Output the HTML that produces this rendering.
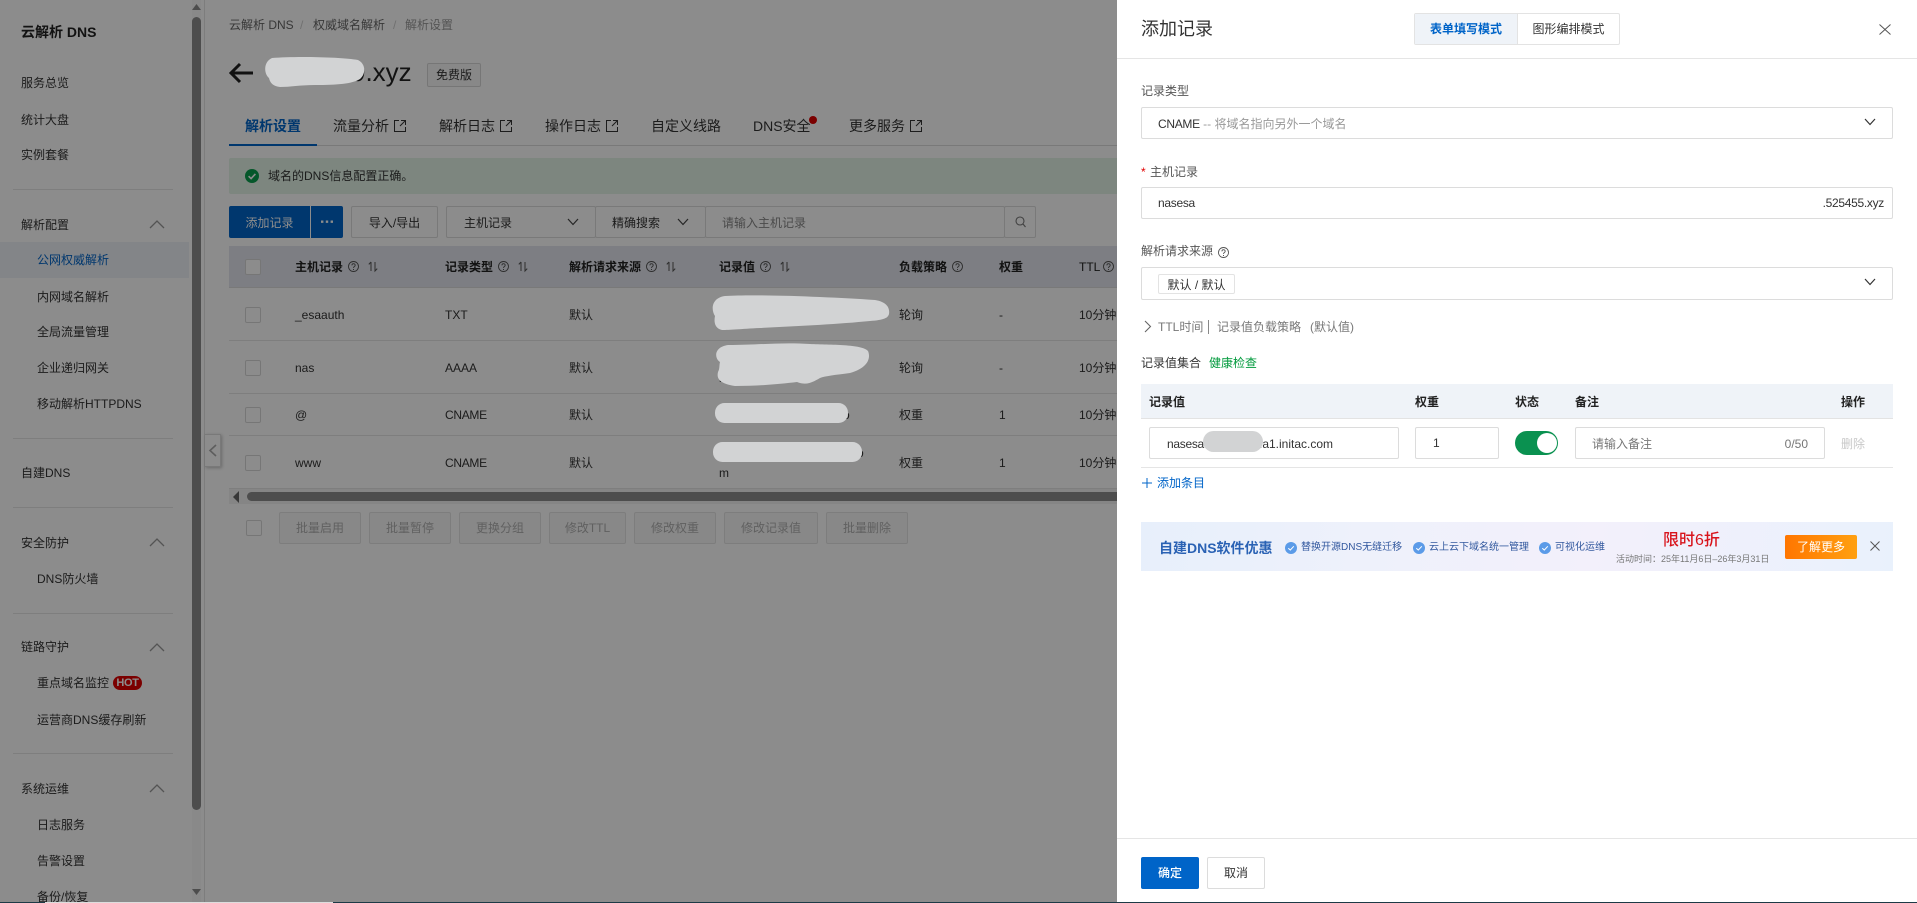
<!DOCTYPE html>
<html lang="zh-CN"><head><meta charset="utf-8"><title>添加记录</title>
<style>
html,body{margin:0;padding:0;width:1917px;height:903px;overflow:hidden;background:#fff}
body{position:relative;font:12px/20px "Liberation Sans","Noto Sans CJK SC",sans-serif;color:#333}
.a,.t,.b{position:absolute;box-sizing:border-box}
.t{white-space:nowrap;height:20px;line-height:20px}
.b{border:1px solid #dcdcdc;background:#fff;border-radius:2px;text-align:center;line-height:30px;white-space:nowrap}
.tb{line-height:32px}
.dv{position:absolute;left:13px;width:160px;height:1px;background:#e5e5e5}
.th{font-weight:700;color:#222}
.dis{background:#f7f7f7;color:#b0b0b0;border-color:#e3e3e3}
.cb{position:absolute;width:16px;height:16px;border:1px solid #d8d8d8;border-radius:2px;box-sizing:border-box;background:#fff}
svg{position:absolute;overflow:visible;fill:none}
.line{position:absolute;height:1px;background:#e5e5e5}
#overlay{position:absolute;left:0;top:0;width:1917px;height:903px;background:rgba(0,0,0,.45)}
#drawer{position:absolute;left:1117px;top:0;width:800px;height:903px;background:#fff}
#drawer .inner{position:absolute;left:-1117px;top:0;width:1917px;height:903px}
.ink{position:absolute;fill:#d2d3d4}
</style></head><body>

<!-- sidebar -->
<div class="a" style="left:0;top:0;width:205px;height:903px;background:#fff;border-right:1px solid #e3e3e3"></div>
<div class="a" style="left:192px;top:0;width:9px;height:903px;background:#fafafa"></div>
<div class="a" style="left:192px;top:17px;width:9px;height:793px;background:#8c8c8c;border-radius:5px"></div>
<svg style="left:192px;top:3px" width="9" height="8"><path d="M4.5 1L9 7H0Z" fill="#8c8c8c"/></svg>
<svg style="left:192px;top:888px" width="9" height="8"><path d="M0 1H9L4.5 7Z" fill="#8c8c8c"/></svg>

<div class="t" style="left:21px;top:22px;font-size:14px;font-weight:700;color:#222">云解析 DNS</div>
<div class="t" style="left:21px;top:73px">服务总览</div>
<div class="t" style="left:21px;top:110px">统计大盘</div>
<div class="t" style="left:21px;top:145px">实例套餐</div>
<div class="dv" style="top:189px"></div>
<div class="t" style="left:21px;top:215px">解析配置</div>
<svg style="left:149px;top:220px" width="16" height="9"><path d="M1 8L8 1L15 8" stroke="#999" stroke-width="1.3"/></svg>
<div class="a" style="left:0;top:242px;width:189px;height:36px;background:#eff3f8"></div>
<div class="t" style="left:37px;top:250px;color:#0064c8">公网权威解析</div>
<div class="t" style="left:37px;top:287px">内网域名解析</div>
<div class="t" style="left:37px;top:322px">全局流量管理</div>
<div class="t" style="left:37px;top:358px">企业递归网关</div>
<div class="t" style="left:37px;top:394px">移动解析HTTPDNS</div>
<div class="dv" style="top:438px"></div>
<div class="t" style="left:21px;top:463px">自建DNS</div>
<div class="dv" style="top:507px"></div>
<div class="t" style="left:21px;top:533px">安全防护</div>
<svg style="left:149px;top:538px" width="16" height="9"><path d="M1 8L8 1L15 8" stroke="#999" stroke-width="1.3"/></svg>
<div class="t" style="left:37px;top:569px">DNS防火墙</div>
<div class="dv" style="top:613px"></div>
<div class="t" style="left:21px;top:637px">链路守护</div>
<svg style="left:149px;top:643px" width="16" height="9"><path d="M1 8L8 1L15 8" stroke="#999" stroke-width="1.3"/></svg>
<div class="t" style="left:37px;top:673px">重点域名监控</div>
<div class="a" style="left:113px;top:676px;width:29px;height:14px;border-radius:7px;background:#e10000;color:#fff;font-size:11px;font-weight:700;line-height:14px;text-align:center;letter-spacing:-.3px">HOT</div>
<div class="t" style="left:37px;top:710px">运营商DNS缓存刷新</div>
<div class="dv" style="top:753px"></div>
<div class="t" style="left:21px;top:779px">系统运维</div>
<svg style="left:149px;top:784px" width="16" height="9"><path d="M1 8L8 1L15 8" stroke="#999" stroke-width="1.3"/></svg>
<div class="t" style="left:37px;top:815px">日志服务</div>
<div class="t" style="left:37px;top:851px">告警设置</div>
<div class="t" style="left:37px;top:887px">备份/恢复</div>

<!-- collapse handle -->
<div class="a" style="left:205px;top:434px;width:16px;height:33px;background:#fff;border:1px solid #ddd;border-left:0;box-shadow:1px 1px 3px rgba(0,0,0,.25)"></div>
<svg style="left:209px;top:444px" width="8" height="13"><path d="M7 1L1 6.5L7 12" stroke="#aaa" stroke-width="1.6"/></svg>

<!-- breadcrumb -->
<div class="t" style="left:229px;top:15px;color:#666">云解析 DNS</div>
<div class="t" style="left:300px;top:15px;color:#ccc">/</div>
<div class="t" style="left:313px;top:15px;color:#666">权威域名解析</div>
<div class="t" style="left:393px;top:15px;color:#ccc">/</div>
<div class="t" style="left:405px;top:15px;color:#999">解析设置</div>

<!-- title -->
<svg style="left:229px;top:62px" width="25" height="22"><path d="M24 11H2M11 2L2 11L11 20" stroke="#222" stroke-width="3"/></svg>
<div class="t" style="left:351px;top:56px;height:32px;line-height:32px;font-size:26px;font-weight:500;color:#222">9.xyz</div>
<div class="a" style="left:427px;top:63px;width:54px;height:24px;border:1px solid #d8d8d8;border-radius:2px;text-align:center;line-height:22px;color:#333;background:#f7f7f7">免费版</div>

<!-- tabs -->
<div class="line" style="left:229px;top:145px;width:900px;background:#dcdcdc"></div>
<div class="a" style="left:229px;top:144px;width:88px;height:2px;background:#0064c8"></div>
<div class="t" style="left:245px;top:116px;font-size:14px;font-weight:700;color:#0064c8">解析设置</div>
<div class="t" style="left:333px;top:116px;font-size:14px">流量分析</div>
<div class="t" style="left:439px;top:116px;font-size:14px">解析日志</div>
<div class="t" style="left:545px;top:116px;font-size:14px">操作日志</div>
<div class="t" style="left:651px;top:116px;font-size:14px">自定义线路</div>
<div class="t" style="left:753px;top:116px;font-size:14px">DNS安全</div>
<div class="a" style="left:809px;top:116px;width:8px;height:8px;border-radius:50%;background:#e10000"></div>
<div class="t" style="left:849px;top:116px;font-size:14px">更多服务</div>
<svg style="left:394px;top:120px" width="12" height="12"><path d="M5 .5H.5V11.5H11.5V7M7 .5H11.5V5M11.5 .5L6 6" stroke="#333"/></svg>
<svg style="left:500px;top:120px" width="12" height="12"><path d="M5 .5H.5V11.5H11.5V7M7 .5H11.5V5M11.5 .5L6 6" stroke="#333"/></svg>
<svg style="left:606px;top:120px" width="12" height="12"><path d="M5 .5H.5V11.5H11.5V7M7 .5H11.5V5M11.5 .5L6 6" stroke="#333"/></svg>
<svg style="left:910px;top:120px" width="12" height="12"><path d="M5 .5H.5V11.5H11.5V7M7 .5H11.5V5M11.5 .5L6 6" stroke="#333"/></svg>

<!-- alert -->
<div class="a" style="left:229px;top:158px;width:890px;height:36px;background:#e3f5e7;border-radius:2px"></div>
<svg style="left:245px;top:169px" width="14" height="14"><circle cx="7" cy="7" r="7" fill="#0a9f4e"/><path d="M3.6 7.2L6.1 9.6L10.4 4.9" stroke="#fff" stroke-width="1.6"/></svg>
<div class="t" style="left:268px;top:166px">域名的DNS信息配置正确。</div>

<!-- toolbar -->
<div class="a" style="left:229px;top:206px;width:81px;height:32px;background:#0064c8;color:#fff;text-align:center;line-height:34px;border-radius:2px 0 0 2px">添加记录</div>
<div class="a" style="left:311px;top:206px;width:32px;height:32px;background:#0064c8;color:#fff;border-radius:0 2px 2px 0"></div>
<svg style="left:321px;top:220px" width="12" height="3"><path d="M0 .5h2.4v2.4H0zM4.8 .5h2.4v2.4H4.8zM9.6 .5h2.4v2.4H9.6z" fill="#fff"/></svg>
<div class="b tb" style="left:351px;top:206px;width:87px;height:32px">导入/导出</div>
<div class="b tb" style="left:446px;top:206px;width:150px;height:32px;text-align:left;padding-left:17px">主机记录</div>
<svg style="left:567px;top:218px" width="12" height="8"><path d="M1 1L6 6.5L11 1" stroke="#444" stroke-width="1.2"/></svg>
<div class="b tb" style="left:595px;top:206px;width:111px;height:32px;text-align:left;padding-left:16px">精确搜索</div>
<svg style="left:677px;top:218px" width="12" height="8"><path d="M1 1L6 6.5L11 1" stroke="#444" stroke-width="1.2"/></svg>
<div class="b tb" style="left:705px;top:206px;width:300px;height:32px;text-align:left;padding-left:16px;color:#888">请输入主机记录</div>
<div class="b" style="left:1004px;top:206px;width:32px;height:32px"></div>
<svg style="left:1015px;top:216px" width="11" height="12"><circle cx="5" cy="5" r="4" stroke="#777" stroke-width="1.1"/><path d="M8 8L10.5 11" stroke="#777" stroke-width="1.1"/></svg>

<!-- table -->
<div class="a" style="left:229px;top:246px;width:890px;height:42px;background:#e3e6ee"></div>
<div class="line" style="left:229px;top:287px;width:890px;background:#dcdcdc"></div>
<div class="line" style="left:229px;top:340px;width:890px"></div>
<div class="line" style="left:229px;top:393px;width:890px"></div>
<div class="line" style="left:229px;top:435px;width:890px"></div>
<div class="line" style="left:229px;top:488px;width:890px"></div>
<div class="cb" style="left:245px;top:259px"></div>
<div class="cb" style="left:245px;top:307px"></div>
<div class="cb" style="left:245px;top:360px"></div>
<div class="cb" style="left:245px;top:407px"></div>
<div class="cb" style="left:245px;top:455px"></div>

<div class="t th" style="left:295px;top:257px">主机记录</div>
<div class="t th" style="left:445px;top:257px">记录类型</div>
<div class="t th" style="left:569px;top:257px">解析请求来源</div>
<div class="t th" style="left:719px;top:257px">记录值</div>
<div class="t th" style="left:899px;top:257px">负载策略</div>
<div class="t th" style="left:999px;top:257px">权重</div>
<div class="t" style="left:1079px;top:257px;color:#222">TTL</div>

<svg style="left:0;top:0" width="1" height="1">
<defs>
<g id="q"><circle cx="5.5" cy="5.5" r="5" stroke="#555" stroke-width=".9" fill="none"/><path d="M3.9 4.4C3.9 2.2 7.2 2.2 7.2 4.3C7.2 5.6 5.5 5.5 5.5 7" stroke="#555" stroke-width=".9" fill="none"/><path d="M5 8h1v1H5z" fill="#555"/></g>
<g id="s"><path d="M3 1V10M3 1L.8 3.4M7 1V10L9.2 7.6" stroke="#555" fill="none"/></g>
</defs>
<use href="#q" x="348" y="261"/><use href="#s" x="368" y="261"/>
<use href="#q" x="498" y="261"/><use href="#s" x="518" y="261"/>
<use href="#q" x="646" y="261"/><use href="#s" x="666" y="261"/>
<use href="#q" x="760" y="261"/><use href="#s" x="780" y="261"/>
<use href="#q" x="952" y="261"/>
<use href="#q" x="1103" y="261"/>
</svg>

<div class="t" style="left:295px;top:305px">_esaauth</div>
<div class="t" style="left:295px;top:358px">nas</div>
<div class="t" style="left:295px;top:405px">@</div>
<div class="t" style="left:295px;top:453px">www</div>
<div class="t" style="left:445px;top:305px">TXT</div>
<div class="t" style="left:445px;top:358px">AAAA</div>
<div class="t" style="left:445px;top:405px;letter-spacing:-.3px">CNAME</div>
<div class="t" style="left:445px;top:453px;letter-spacing:-.3px">CNAME</div>
<div class="t" style="left:569px;top:305px">默认</div>
<div class="t" style="left:569px;top:358px">默认</div>
<div class="t" style="left:569px;top:405px">默认</div>
<div class="t" style="left:569px;top:453px">默认</div>
<div class="t" style="left:899px;top:305px">轮询</div>
<div class="t" style="left:899px;top:358px">轮询</div>
<div class="t" style="left:899px;top:405px">权重</div>
<div class="t" style="left:899px;top:453px">权重</div>
<div class="t" style="left:999px;top:305px">-</div>
<div class="t" style="left:999px;top:358px">-</div>
<div class="t" style="left:999px;top:405px">1</div>
<div class="t" style="left:999px;top:453px">1</div>
<div class="t" style="left:1079px;top:305px">10分钟</div>
<div class="t" style="left:1079px;top:358px">10分钟</div>
<div class="t" style="left:1079px;top:405px">10分钟</div>
<div class="t" style="left:1079px;top:453px">10分钟</div>
<div class="t" style="left:719px;top:368px">b</div>
<div class="t" style="left:843px;top:405px">o</div>
<div class="t" style="left:857px;top:443px">o</div>
<div class="t" style="left:719px;top:463px">m</div>

<!-- h-scroll -->
<div class="a" style="left:229px;top:489px;width:890px;height:15px;background:#f3f3f3"></div>
<svg style="left:233px;top:491px" width="7" height="12"><path d="M6 0V12L0 6Z" fill="#666"/></svg>
<div class="a" style="left:247px;top:492px;width:880px;height:9px;border-radius:5px;background:#8c8c8c"></div>

<!-- batch -->
<div class="cb" style="left:246px;top:520px"></div>
<div class="b dis" style="left:279px;top:512px;width:82px;height:32px">批量启用</div>
<div class="b dis" style="left:369px;top:512px;width:82px;height:32px">批量暂停</div>
<div class="b dis" style="left:459px;top:512px;width:82px;height:32px">更换分组</div>
<div class="b dis" style="left:549px;top:512px;width:77px;height:32px">修改TTL</div>
<div class="b dis" style="left:634px;top:512px;width:82px;height:32px">修改权重</div>
<div class="b dis" style="left:724px;top:512px;width:94px;height:32px">修改记录值</div>
<div class="b dis" style="left:826px;top:512px;width:82px;height:32px">批量删除</div>

<div id="overlay"></div>

<!-- redaction strokes -->
<svg class="ink" style="left:0;top:0" width="1117" height="903">
<path fill="#d2d3d4" d="M272 58C295 56 342 57 358 60C366 64 366 74 360 79C352 84 337 85 315 85C300 85 290 87 280 87C272 86 270 82 269 78C264 74 263 62 272 58Z"/>
<path fill="#d2d3d4" d="M725 296C760 294 830 297 875 300C887 302 890 308 889 314C888 318 884 320 870 321C840 324 800 326 760 328C740 329 730 330 722 330C714 328 714 321 715 316C711 310 711 298 725 296Z"/>
<path fill="#d2d3d4" d="M728 345C760 345 780 342 810 344C830 345 862 344 868 351C871 358 868 368 850 373C835 375 825 376 820 378C810 384 805 385 797 382C780 384 760 386 735 386C722 384 716 380 718 372C720 368 719 366 720 362C714 358 714 347 728 345Z"/>
<rect x="715" y="403" width="133" height="20" rx="9.5" fill="#d2d3d4"/>
<rect x="713" y="442" width="149" height="20" rx="9.5" fill="#d2d3d4"/>
</svg>

<!-- drawer -->
<div id="drawer"><div class="inner">
<div class="t" style="left:1141px;top:16px;height:26px;line-height:26px;font-size:18px;color:#333">添加记录</div>
<div class="a" style="left:1414px;top:13px;width:206px;height:32px;border:1px solid #e3e3e3;border-radius:2px"></div>
<div class="a" style="left:1415px;top:14px;width:102px;height:30px;background:#eff3f8;color:#0064c8;font-weight:700;text-align:center;line-height:30px">表单填写模式</div>
<div class="a" style="left:1517px;top:14px;width:1px;height:30px;background:#e3e3e3"></div>
<div class="a" style="left:1518px;top:14px;width:101px;height:30px;text-align:center;line-height:30px">图形编排模式</div>
<svg style="left:1879px;top:24px" width="12" height="11"><path d="M.5 .5L11.5 10.5M11.5 .5L.5 10.5" stroke="#555"/></svg>
<div class="line" style="left:1117px;top:58px;width:800px;height:1px"></div>

<div class="t" style="left:1141px;top:81px;color:#555">记录类型</div>
<div class="b" style="left:1141px;top:107px;width:752px;height:32px;text-align:left;padding-left:16px;line-height:32px"><span style="letter-spacing:-.3px">CNAME</span><span style="color:#999"> -- 将域名指向另外一个域名</span></div>
<svg style="left:1864px;top:118px" width="12" height="8"><path d="M1 1L6 6.5L11 1" stroke="#333" stroke-width="1.2"/></svg>

<div class="t" style="left:1141px;top:162px;color:#e10000">*</div>
<div class="t" style="left:1150px;top:162px;color:#555">主机记录</div>
<div class="b" style="left:1141px;top:187px;width:752px;height:32px;text-align:left;padding-left:16px;letter-spacing:-.3px">nasesa</div>
<div class="t" style="right:33px;top:193px;letter-spacing:-.3px">.525455.xyz</div>

<div class="t" style="left:1141px;top:241px;color:#555">解析请求来源</div>
<svg style="left:1218px;top:247px" width="11" height="11"><use href="#q"/></svg>
<div class="b" style="left:1141px;top:267px;width:752px;height:33px"></div>
<div class="a" style="left:1158px;top:274px;width:77px;height:20px;border:1px solid #e3e3e3;border-radius:2px;text-align:center;line-height:20px">默认 / 默认</div>
<svg style="left:1864px;top:278px" width="12" height="8"><path d="M1 1L6 6.5L11 1" stroke="#333" stroke-width="1.2"/></svg>

<svg style="left:1144px;top:320px" width="8" height="13"><path d="M1 1L6.5 6.5L1 12" stroke="#666" stroke-width="1.1"/></svg>
<div class="t" style="left:1158px;top:317px;color:#777">TTL时间</div>
<div class="a" style="left:1208px;top:320px;width:1px;height:14px;background:#888"></div>
<div class="t" style="left:1217px;top:317px;color:#777">记录值负载策略</div>
<div class="t" style="left:1310px;top:317px;color:#777">(默认值)</div>

<div class="t" style="left:1141px;top:353px">记录值集合</div>
<div class="t" style="left:1209px;top:353px;color:#009a3c">健康检查</div>

<div class="a" style="left:1141px;top:384px;width:752px;height:35px;background:#eff3f8;border-bottom:1px solid #e3e3e3"></div>
<div class="t th" style="left:1149px;top:392px">记录值</div>
<div class="t th" style="left:1415px;top:392px">权重</div>
<div class="t th" style="left:1515px;top:392px">状态</div>
<div class="t th" style="left:1575px;top:392px">备注</div>
<div class="t th" style="left:1841px;top:392px">操作</div>

<div class="b" style="left:1149px;top:427px;width:250px;height:32px"></div>
<div class="t" style="left:1167px;top:434px;letter-spacing:-.3px">nasesa</div>
<div class="t" style="left:1259px;top:434px">.a1.initac.com</div>
<div class="a" style="left:1203px;top:431px;width:60px;height:21px;border-radius:11px;background:#d2d3d4"></div>
<div class="b" style="left:1415px;top:427px;width:84px;height:32px;text-align:left;padding-left:17px;line-height:31px">1</div>
<div class="a" style="left:1515px;top:431px;width:43px;height:24px;border-radius:12px;background:#0a9150"></div>
<div class="a" style="left:1537px;top:433px;width:20px;height:20px;border-radius:50%;background:#fff"></div>
<div class="b" style="left:1575px;top:427px;width:250px;height:32px"></div>
<div class="t" style="left:1592px;top:434px;color:#777">请输入备注</div>
<div class="t" style="right:109px;top:434px;color:#777">0/50</div>
<div class="t" style="left:1841px;top:434px;color:#c8c8c8">删除</div>
<div class="line" style="left:1141px;top:467px;width:752px"></div>
<svg style="left:1142px;top:478px" width="10" height="10"><path d="M5 0V10M0 5H10" stroke="#0064c8"/></svg>
<div class="t" style="left:1157px;top:473px;color:#0064c8">添加条目</div>

<!-- banner -->
<div class="a" style="left:1141px;top:522px;width:752px;height:49px;background:linear-gradient(100deg,#e7effb 0%,#eef1fb 30%,#f3f0fb 60%,#e9f1fc 100%)"></div>
<div class="t" style="left:1159px;top:538px;font-size:14px;font-weight:700;color:#2a62b4">自建DNS软件优惠</div>
<svg style="left:1285px;top:542px" width="12" height="12"><circle cx="6" cy="6" r="6" fill="#5b9be8"/><path d="M3.3 6.2L5.3 8L8.8 4.3" stroke="#fff"/></svg>
<div class="t" style="left:1301px;top:538px;font-size:10px;color:#33599f">替换开源DNS无缝迁移</div>
<svg style="left:1413px;top:542px" width="12" height="12"><circle cx="6" cy="6" r="6" fill="#5b9be8"/><path d="M3.3 6.2L5.3 8L8.8 4.3" stroke="#fff"/></svg>
<div class="t" style="left:1429px;top:538px;font-size:10px;color:#33599f">云上云下域名统一管理</div>
<svg style="left:1539px;top:542px" width="12" height="12"><circle cx="6" cy="6" r="6" fill="#5b9be8"/><path d="M3.3 6.2L5.3 8L8.8 4.3" stroke="#fff"/></svg>
<div class="t" style="left:1555px;top:538px;font-size:10px;color:#33599f">可视化运维</div>
<div class="t" style="left:1663px;top:531px;font-size:16px;font-weight:500;color:#d8141c">限时6折</div>
<div class="t" style="left:1616px;top:549px;font-size:9px;color:#777">活动时间：25年11月6日–26年3月31日</div>
<div class="a" style="left:1785px;top:535px;width:72px;height:24px;border-radius:2px;background:linear-gradient(90deg,#ff7600,#ffa010);color:#fff;text-align:center;line-height:24px">了解更多</div>
<svg style="left:1870px;top:541px" width="10" height="10"><path d="M.5 .5L9.5 9.5M9.5 .5L.5 9.5" stroke="#555"/></svg>

<!-- footer -->
<div class="line" style="left:1117px;top:838px;width:800px"></div>
<div class="a" style="left:1141px;top:857px;width:58px;height:32px;background:#0064c8;color:#fff;border-radius:2px;text-align:center;line-height:32px;font-weight:500">确定</div>
<div class="b" style="left:1207px;top:857px;width:58px;height:32px">取消</div>
</div></div>

<!-- bottom edge -->
<div class="a" style="left:0;top:902px;width:1917px;height:1px;background:#1d3a46"></div>
<div class="a" style="left:45px;top:902px;width:288px;height:1px;background:#ddd"></div>
</body></html>
